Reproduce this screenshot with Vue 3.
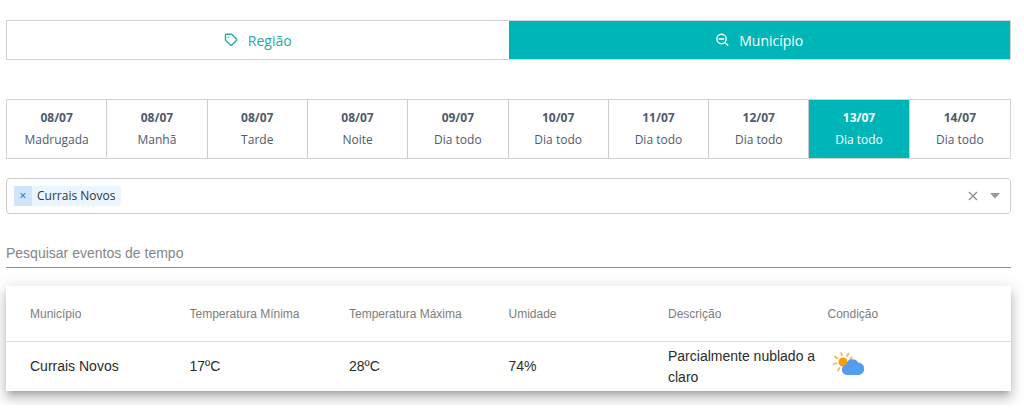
<script setup>
import { ref } from 'vue'

const periods = [
  ['08/07', 'Madrugada'],
  ['08/07', 'Manhã'],
  ['08/07', 'Tarde'],
  ['08/07', 'Noite'],
  ['09/07', 'Dia todo'],
  ['10/07', 'Dia todo'],
  ['11/07', 'Dia todo'],
  ['12/07', 'Dia todo'],
  ['13/07', 'Dia todo'],
  ['14/07', 'Dia todo'],
]
const view = ref('municipio')
const period = ref(8)
const cities = ref(['Currais Novos'])
const query = ref('')

const columns = ['Município', 'Temperatura Mínima', 'Temperatura Máxima', 'Umidade', 'Descrição', 'Condição']
const rows = [['Currais Novos', '17ºC', '28ºC', '74%', 'Parcialmente nublado a claro']]
</script>

<template>
  <main class="page">
    <nav class="views">
      <button type="button" :class="{ active: view === 'regiao' }" @click="view = 'regiao'">
        <svg class="icon" viewBox="0 0 14 14" aria-hidden="true">
          <path d="M1.500 2.200q0-.9.9-.9h4.800q.5 0 .9.400l4.300 4.400q.6.700 0 1.300l-4.500 4.500q-.6.600-1.300 0L1.900 7.600q-.4-.4-.4-.9z" />
          <path d="M4.300 4.200h.1" />
        </svg>
        <span>Região</span>
      </button>
      <button type="button" :class="{ active: view === 'municipio' }" @click="view = 'municipio'">
        <svg class="icon" viewBox="0 0 14 14" aria-hidden="true">
          <circle cx="6.500" cy="6" r="4.700" />
          <path d="M10 9.500l2.800 2.800M4.300 6h4.400" />
        </svg>
        <span>Município</span>
      </button>
    </nav>

    <div class="periods">
      <button
        v-for="(item, i) in periods"
        :key="i"
        type="button"
        :class="{ active: period === i }"
        @click="period = i"
      >
        <strong>{{ item[0] }}</strong>
        <span>{{ item[1] }}</span>
      </button>
    </div>

    <div class="picker">
      <span v-for="city in cities" :key="city" class="tag">
        <button type="button" :aria-label="'Remover ' + city" @click="cities = cities.filter((c) => c !== city)">×</button>
        <span>{{ city }}</span>
      </span>
      <input class="entry" type="text" aria-label="Adicionar município" />
      <button class="clear" type="button" aria-label="Limpar" @click="cities = []">
        <svg viewBox="0 0 10 10" aria-hidden="true"><path d="M1 1l8 8M9 1l-8 8" /></svg>
      </button>
      <button class="open" type="button" aria-label="Abrir lista">
        <svg viewBox="0 0 10 6" aria-hidden="true"><path d="M0 0h10L5 5.500z" /></svg>
      </button>
    </div>

    <input v-model="query" class="search" type="text" placeholder="Pesquisar eventos de tempo" aria-label="Pesquisar eventos de tempo" />

    <table class="card">
      <thead>
        <tr>
          <th v-for="name in columns" :key="name" scope="col">{{ name }}</th>
        </tr>
      </thead>
      <tbody>
        <tr v-for="row in rows" :key="row[0]">
          <td v-for="(cell, i) in row" :key="i">{{ cell }}</td>
          <td>
            <svg class="weather" viewBox="0 0 42 42" role="img" aria-label="Parcialmente nublado">
              <path
                class="rays"
                d="M13 7l1 2.500M20.500 7.500l-1.500 2.500M7 10.500l2.500 2M5.500 18l3-.8M10 24.500l1.500-2.500M24 11.500l-2 1.500"
              />
              <circle class="sun" cx="15" cy="16" r="4.500" />
              <path
                class="cloud"
                d="M19 29a5.300 5.300 0 0 1-.8-10.500 6.400 6.400 0 0 1 11.900-2 6.300 6.300 0 0 1 .9 12.500z"
              />
            </svg>
          </td>
        </tr>
      </tbody>
    </table>
  </main>
</template>

<style>
body {
  background: #fff;
}
</style>

<style scoped>
.page {
  display: flow-root;
  overflow: hidden;
  padding: 20px 13px 14px 6px;
  font-family: "Open Sans", "Noto Sans", sans-serif;
}

.page,
.page * {
  box-sizing: border-box;
}

button {
  margin: 0;
  padding: 0;
  border: 0;
  background: none;
  font: inherit;
  color: inherit;
  cursor: pointer;
}

.views {
  display: grid;
  grid-template-columns: 1fr 1fr;
  border: 1px solid #d4d4d4;
}

.views button {
  display: flex;
  align-items: center;
  justify-content: center;
  gap: 10px;
  height: 38px;
  font-size: 14px;
  font-weight: 500;
  color: #27a9a9;
}

.views .active {
  background: #00b5b8;
  color: #fff;
}

.icon {
  width: 14px;
  height: 14px;
  fill: none;
  stroke: currentColor;
  stroke-width: 1.4;
  stroke-linecap: round;
  stroke-linejoin: round;
}

.periods {
  display: grid;
  grid-template-columns: repeat(10, 1fr);
  margin-top: 39px;
  border: 1px solid #d4d4d4;
}

.periods button {
  height: 58px;
  border-right: 1px solid #ccc;
  font-size: 12px;
  line-height: 22px;
  color: #4e5a6e;
}

.periods button:last-child {
  border-right: 0;
}

.periods .active {
  background: #00b5b8;
  color: #fff;
}

.periods strong,
.periods span {
  display: block;
}

.picker {
  display: flex;
  align-items: center;
  height: 36px;
  margin-top: 19px;
  padding: 0 10px 0 7px;
  border: 1px solid #ccc;
  border-radius: 4px;
  font-size: 12px;
  color: #333;
}

.tag {
  display: flex;
  height: 20px;
  border-radius: 2px;
  background: #ebf5ff;
  line-height: 20px;
}

.tag button {
  width: 18px;
  background: #cfe5fb;
  color: #445a70;
}

.tag span {
  padding: 0 6px 0 5px;
}

.entry {
  flex: 1;
  min-width: 0;
  border: 0;
  outline: 0;
  background: none;
  font: inherit;
}

.clear,
.open {
  display: flex;
}

.clear svg {
  width: 10px;
  height: 10px;
  fill: none;
  stroke: #8c8c8c;
  stroke-width: 1.3;
}

.open {
  margin-left: 12px;
}

.open svg {
  width: 10px;
  height: 6px;
  fill: #999;
}

.search {
  display: block;
  width: 100%;
  height: 30px;
  margin-top: 24px;
  padding: 0;
  border: 0;
  border-bottom: 1px solid #8c8c8c;
  border-radius: 0;
  outline: 0;
  font-family: "Liberation Sans", Arial, sans-serif;
  font-size: 14px;
  color: #333;
}

.search::placeholder {
  color: #858585;
  opacity: 1;
}

.card {
  display: block;
  margin-top: 18px;
  background: #fff;
  box-shadow:
    0 5px 5px -3px rgba(0, 0, 0, 0.2),
    0 8px 10px 1px rgba(0, 0, 0, 0.14),
    0 3px 14px 2px rgba(0, 0, 0, 0.12);
  font-family: "Liberation Sans", Arial, sans-serif;
}

.card thead,
.card tbody {
  display: block;
}

.card tr {
  display: grid;
  grid-template-columns: repeat(6, 1fr);
  align-items: center;
  padding: 0 24px;
}

.card thead tr {
  min-height: 56px;
  border-bottom: 1px solid #ddd;
}

.card tbody tr {
  min-height: 49px;
}

.card th,
.card td {
  padding: 0;
  text-align: left;
}

.card th {
  font-size: 12px;
  font-weight: 400;
  color: #7d7d7d;
}

.card td {
  padding-right: 8px;
  font-size: 14px;
  line-height: 21px;
  color: #2b2b2b;
}

.weather {
  display: block;
  width: 42px;
  height: 42px;
}

.rays {
  fill: none;
  stroke: #f5b95a;
  stroke-width: 1.8;
  stroke-linecap: round;
}

.sun {
  fill: #fb9d0b;
}

.cloud {
  fill: #549ced;
}
</style>
